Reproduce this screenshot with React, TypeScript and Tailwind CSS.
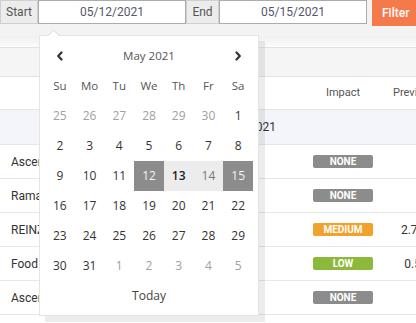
import React from "react";

const Chevron = ({ dir }: { dir: "l" | "r" }) => (
  <svg width="8" height="10" viewBox="0 0 8 10" fill="none">
    {dir === "l" ? (
      <path d="M5.5 1.5 L2.2 5 L5.5 8.5" stroke="#333" strokeWidth="2.2" strokeLinecap="round" strokeLinejoin="round" />
    ) : (
      <path d="M2.5 1.5 L5.8 5 L2.5 8.5" stroke="#333" strokeWidth="2.2" strokeLinecap="round" strokeLinejoin="round" />
    )}
  </svg>
);

type Day = { n: number; other?: boolean };

const weeks: Day[][] = [
  [{ n: 25, other: true }, { n: 26, other: true }, { n: 27, other: true }, { n: 28, other: true }, { n: 29, other: true }, { n: 30, other: true }, { n: 1 }],
  [{ n: 2 }, { n: 3 }, { n: 4 }, { n: 5 }, { n: 6 }, { n: 7 }, { n: 8 }],
  [{ n: 9 }, { n: 10 }, { n: 11 }, { n: 12 }, { n: 13 }, { n: 14 }, { n: 15 }],
  [{ n: 16 }, { n: 17 }, { n: 18 }, { n: 19 }, { n: 20 }, { n: 21 }, { n: 22 }],
  [{ n: 23 }, { n: 24 }, { n: 25 }, { n: 26 }, { n: 27 }, { n: 28 }, { n: 29 }],
  [{ n: 30 }, { n: 31 }, { n: 1, other: true }, { n: 2, other: true }, { n: 3, other: true }, { n: 4, other: true }, { n: 5, other: true }],
];

function dayClass(d: Day) {
  if (d.other) return "text-[#a0a0a0]";
  if (d.n === 12 || d.n === 15) return "bg-[#8c8c8c] text-[#f4f4f4]";
  if (d.n === 13) return "bg-[#ececec] text-[#222] font-semibold";
  if (d.n === 14) return "bg-[#ececec] text-[#777]";
  return "text-[#333]";
}

const Badge = ({ label, color }: { label: string; color: string }) => (
  <div className={`w-[60px] h-[13px] rounded-[2px] flex items-center justify-center text-white text-[10px] font-bold leading-none ${color}`}>
    {label}
  </div>
);

const rows = [
  { name: "Ascendas REIT Distribution", badge: "NONE", color: "bg-[#8c8c8c]", prev: "" },
  { name: "Ramayana Lestari Sentosa", badge: "NONE", color: "bg-[#8c8c8c]", prev: "" },
  { name: "REINZ House Price Index", badge: "MEDIUM", color: "bg-[#f2a12b]", prev: "2.70%" },
  { name: "Food Price Index", badge: "LOW", color: "bg-[#8cb83c]", prev: "0.5%" },
  { name: "Ascendas India Trust", badge: "NONE", color: "bg-[#8c8c8c]", prev: "" },
];

export default function App() {
  return (
    <div className="relative w-[416px] h-[323px] overflow-hidden bg-[#f3f3f3] font-['Roboto',sans-serif]">
      {/* top bar */}
      <div className="flex items-start h-[36px]">
        <div className="shrink-0 w-[38px] h-[24px] bg-[#ececec] border border-[#cfcfcf] flex items-center justify-center text-[12px] text-[#555]">
          Start
        </div>
        <div className="shrink-0 w-[148px] h-[24px] bg-white border border-[#ababab] flex items-center justify-center text-[12px] text-[#55566a]">
          05/12/2021
        </div>
        <div className="shrink-0 w-[33px] h-[24px] bg-[#ececec] border border-[#cfcfcf] flex items-center justify-center text-[12px] text-[#555]">
          End
        </div>
        <div className="shrink-0 w-[148px] h-[24px] bg-white border border-[#ababab] flex items-center justify-center text-[12px] text-[#55566a]">
          05/15/2021
        </div>
        <div className="shrink-0 ml-[5px] w-[48px] h-[26px] bg-[#f4794b] flex items-center pl-[10px] text-[12px] font-medium text-white">
          Filter
        </div>
      </div>

      {/* grid */}
      <div className="bg-white">
        <div className="h-[12px] bg-gradient-to-b from-[#f0f0f0] to-[#fbfbfb] border-b border-[#e2e2e2]" />
        <div className="h-[29px] bg-[#f5f5f5] border-b border-[#e3e3e3]" />
        <div className="flex h-[33px] border-b border-[#e6e6e6] items-center text-[11px] text-[#555]">
          <div className="shrink-0 w-[300px]" />
          <div className="shrink-0 w-[86px] text-center">Impact</div>
          <div className="shrink-0 w-[62px] pl-[7px] whitespace-nowrap">Previous</div>
        </div>
        <div className="flex h-[35px] bg-[#f4f5fa] border-b border-[#e6e6ec] items-center text-[12px] text-[#333]">
          <div className="shrink-0 w-[276px] text-right whitespace-nowrap">Wednesday, May 12, 2021</div>
        </div>
        {rows.map((r, i) => (
          <div key={i} className="flex h-[34px] border-b border-[#e8e8e8] items-center text-[12px] text-[#333]">
            <div className="shrink-0 w-[300px] pl-[11px] whitespace-nowrap overflow-hidden">{r.name}</div>
            <div className="shrink-0 w-[86px] flex justify-center">
              <Badge label={r.badge} color={r.color} />
            </div>
            <div className="shrink-0 w-[62px] text-center whitespace-nowrap">{r.prev}</div>
          </div>
        ))}
        <div className="h-[20px]" />
      </div>

      {/* date picker popup */}
      <div className="absolute left-[39px] top-[35px] w-[220px] h-[281px] bg-white border border-[#e4e4e4] shadow-[6px_6px_0_rgba(0,0,0,0.075)] font-['Open_Sans',sans-serif] px-[5px] pt-[5px]">
        <svg className="absolute left-[7px] top-[-6px]" width="13" height="7" viewBox="0 0 13 7">
          <path d="M0 6.5 L6.5 0.5 L13 6.5" fill="white" stroke="#dcdcdc" strokeWidth="1" />
          <rect x="0" y="6.2" width="13" height="1" fill="white" />
        </svg>
        <div className="flex h-[30px] items-center justify-between">
          <div className="w-[30px] flex justify-center"><Chevron dir="l" /></div>
          <div className="text-[11.5px] leading-none text-[#555]">May 2021</div>
          <div className="w-[30px] flex justify-center"><Chevron dir="r" /></div>
        </div>
        <div className="grid grid-cols-7 h-[30px] items-center text-[11.5px] leading-none text-[#555]">
          {["Su", "Mo", "Tu", "We", "Th", "Fr", "Sa"].map((d) => (
            <div key={d} className="text-center">{d}</div>
          ))}
        </div>
        {weeks.map((w, wi) => (
          <div key={wi} className="grid grid-cols-7">
            {w.map((d, di) => (
              <div key={di} className={`h-[30px] flex items-center justify-center text-[12px] leading-none ${dayClass(d)}`}>
                {d.n}
              </div>
            ))}
          </div>
        ))}
        <div className="h-[30px] flex items-center justify-center text-[12px] leading-none text-[#444]">Today</div>
      </div>
    </div>
  );
}
